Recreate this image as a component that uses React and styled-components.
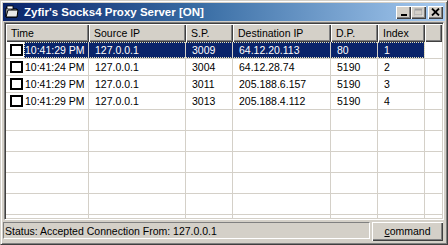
import React from 'react';
import styled, { createGlobalStyle } from 'styled-components';

const Global = createGlobalStyle`
  html, body { margin: 0; padding: 0; background: #d4d0c8; }
  body { font-family: "Liberation Sans", Arial, sans-serif; }
`;

const Window = styled.div`
  width: 448px;
  height: 245px;
  box-sizing: border-box;
  background: #d4d0c8;
  border: 1px solid;
  border-color: #d4d0c8 #404040 #404040 #d4d0c8;
  box-shadow: inset 1px 1px 0 #ffffff, inset -1px -1px 0 #808080;
  padding: 2px;
  display: flex;
  flex-direction: column;
  font-size: 10.5px;
  color: #000;
  overflow: hidden;
`;

const TitleBar = styled.div`
  height: 18px;
  flex: none;
  display: flex;
  align-items: center;
  padding: 0 2px 0 1px;
  background: linear-gradient(to right, #0a246a 0%, #3a6ea5 45%, #a6caf0 100%);
`;

const TitleIcon = styled.svg`
  width: 16px;
  height: 16px;
  flex: none;
`;

const TitleText = styled.div`
  margin-left: 4px;
  flex: 1;
  color: #fff;
  font-weight: bold;
  font-size: 11.5px;
  white-space: nowrap;
`;

const Caption = styled.div`
  display: flex;
  align-items: center;
  gap: ${p => p.$gap || 0}px;
`;

const CapButton = styled.div`
  width: 15px;
  height: 13px;
  box-sizing: border-box;
  background: #d4d0c8;
  box-shadow: inset 1px 1px 0 #ffffff, inset -1px -1px 0 #404040, inset -2px -2px 0 #808080;
  display: flex;
  align-items: center;
  justify-content: center;
`;

const Body = styled.div`
  flex: 1;
  display: flex;
  flex-direction: column;
  margin-top: 1px;
  min-height: 0;
`;

const List = styled.div`
  height: 198px;
  margin: 0 1px;
  box-sizing: border-box;
  background: #fff;
  border: 1px solid;
  border-color: #808080 #ffffff #ffffff #808080;
  box-shadow: inset 1px 1px 0 #404040, inset -1px -1px 0 #d4d0c8;
  padding: 1px;
  overflow: hidden;
  display: flex;
  flex-direction: column;
`;

const cols = '83px 97px 47px 98px 47px 47px 1fr';

const HeaderRow = styled.div`
  display: grid;
  grid-template-columns: ${cols};
  height: 18px;
  flex: none;
`;

const HeaderCell = styled.div`
  background: #d4d0c8;
  box-shadow: inset 1px 1px 0 #ffffff, inset -1px -1px 0 #404040, inset -2px -2px 0 #808080;
  padding-left: 5px;
  display: flex;
  align-items: center;
  white-space: nowrap;
`;

const Row = styled.div`
  position: relative;
  display: grid;
  grid-template-columns: ${cols};
  height: ${p => p.$h}px;
  flex: none;
  box-sizing: border-box;
  border-bottom: 1px solid #d4d0c8;
`;

const Cell = styled.div`
  border-right: ${p => (p.$last ? 'none' : '1px solid #d4d0c8')};
  background: ${p => (p.$sel ? '#0a246a' : 'transparent')};
  color: ${p => (p.$sel ? '#fff' : '#000')};
  padding-left: 6px;
  display: flex;
  align-items: center;
  white-space: nowrap;
`;

const TimeCell = styled.div`
  border-right: 1px solid #d4d0c8;
  display: flex;
  align-items: stretch;
  padding-left: 4px;
`;

const CheckBox = styled.div`
  width: 13px;
  height: 12px;
  box-sizing: border-box;
  border: 2px solid #000;
  background: #fff;
  align-self: center;
  flex: none;
  margin-right: 1px;
`;

const TimeText = styled.div`
  flex: 1;
  display: flex;
  align-items: center;
  padding-left: 1px;
  background: ${p => (p.$sel ? '#0a246a' : 'transparent')};
  color: ${p => (p.$sel ? '#fff' : '#000')};
  white-space: nowrap;
`;

const Focus = styled.div`
  position: absolute;
  left: 18px;
  top: 0;
  bottom: 0;
  width: 401px;
  box-sizing: border-box;
  border: 1px dotted #e8e4b8;
  pointer-events: none;
`;

const StatusRow = styled.div`
  display: flex;
  gap: 2px;
  margin-top: 2px;
  height: 19px;
  padding-right: 2px;
`;

const StatusPanel = styled.div`
  flex: 1;
  height: 17px;
  box-sizing: border-box;
  border: 1px solid;
  border-color: #808080 #ffffff #ffffff #808080;
  padding-left: 1px;
  display: flex;
  align-items: center;
  white-space: nowrap;
`;

const CommandButton = styled.div`
  width: 71px;
  height: 19px;
  box-sizing: border-box;
  background: #d4d0c8;
  box-shadow: inset 1px 1px 0 #ffffff, inset -1px -1px 0 #404040, inset -2px -2px 0 #808080;
  display: flex;
  align-items: center;
  justify-content: center;
  padding-bottom: 1px;
  u { text-decoration: underline; }
`;

const rows = [
  ['10:41:29 PM', '127.0.0.1', '3009', '64.12.20.113', '80', '1'],
  ['10:41:24 PM', '127.0.0.1', '3004', '64.12.28.74', '5190', '2'],
  ['10:41:29 PM', '127.0.0.1', '3011', '205.188.6.157', '5190', '3'],
  ['10:41:29 PM', '127.0.0.1', '3013', '205.188.4.112', '5190', '4'],
];

const headers = ['Time', 'Source IP', 'S.P.', 'Destination IP', 'D.P.', 'Index', ''];

export default function App() {
  return (
    <>
      <Global />
      <Window>
        <TitleBar>
          <TitleIcon viewBox="0 0 16 16">
            <path d="M2 4 L6 4 L7 5 L13 5 L13 13 L2 13 Z" fill="#fff" stroke="#000" strokeWidth="1" />
            <path d="M4 6 L14 6 L13 13 L2 13 Z" fill="#e8e8e8" stroke="#000" strokeWidth="1" />
            <rect x="3" y="2" width="6" height="3" fill="#fff" stroke="#000" strokeWidth="0.8" />
          </TitleIcon>
          <TitleText>Zyfir's Socks4 Proxy Server [ON]</TitleText>
          <Caption $gap={2}>
            <Caption>
              <CapButton>
                <svg width="8" height="8" viewBox="0 0 8 8">
                  <rect x="1" y="6" width="6" height="2" fill="#000" />
                </svg>
              </CapButton>
              <CapButton>
                <svg width="10" height="9" viewBox="0 0 10 9">
                  <rect x="1.5" y="1.5" width="7" height="6" fill="none" stroke="#ffffff" strokeWidth="1" />
                  <rect x="1" y="1" width="7" height="6" fill="none" stroke="#a0a0a0" strokeWidth="1" />
                  <rect x="1" y="1" width="7" height="1.5" fill="#a0a0a0" />
                </svg>
              </CapButton>
            </Caption>
            <CapButton>
              <svg width="9" height="8" viewBox="0 0 9 8">
                <path d="M1 0.5 L8 7.5 M8 0.5 L1 7.5" stroke="#000" strokeWidth="1.8" />
              </svg>
            </CapButton>
          </Caption>
        </TitleBar>
        <Body>
          <List>
            <HeaderRow>
              {headers.map((h, i) => (
                <HeaderCell key={i}>{h}</HeaderCell>
              ))}
            </HeaderRow>
            {rows.map((r, i) => {
              const sel = i === 0;
              return (
                <Row key={i} $h={17}>
                  <TimeCell>
                    <CheckBox />
                    <TimeText $sel={sel}>{r[0]}</TimeText>
                  </TimeCell>
                  {r.slice(1).map((c, j) => (
                    <Cell key={j} $sel={sel}>{c}</Cell>
                  ))}
                  <Cell $last />
                  {sel && <Focus />}
                </Row>
              );
            })}
            {Array.from({ length: 6 }).map((_, i) => (
              <Row key={'e' + i} $h={21}>
                {headers.map((_, j) => (
                  <Cell key={j} $last={j === 6} />
                ))}
              </Row>
            ))}
          </List>
          <StatusRow>
            <StatusPanel>Status: Accepted Connection From: 127.0.0.1</StatusPanel>
            <CommandButton>
              <span><u>c</u>ommand</span>
            </CommandButton>
          </StatusRow>
        </Body>
      </Window>
    </>
  );
}
